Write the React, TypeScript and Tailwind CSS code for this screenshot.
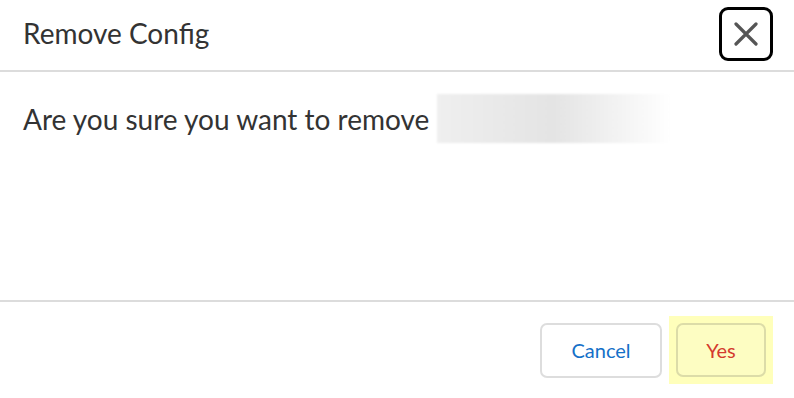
import { useState } from "react"

function CloseIcon() {
  return (
    <svg width="24" height="24" viewBox="0 0 24 24" fill="none" aria-hidden="true">
      <path d="M2 2L22 22M22 2L2 22" stroke="#555" strokeWidth="3.2" strokeLinecap="round" />
    </svg>
  )
}

export default function App() {
  const [open, setOpen] = useState(true)
  const configName = "config-name"

  if (!open) return null

  return (
    <div className="w-[794px] h-[398px] bg-white flex flex-col font-['Lato',sans-serif] text-[#333]">
      {/* Header */}
      <div className="h-[72px] flex items-center justify-between pl-[23px] pr-[21px] border-b-2 border-[#dcdcdc]">
        <h2 className="text-[28px] leading-none pb-[4px]">Remove Config</h2>
        <button
          onClick={() => setOpen(false)}
          aria-label="Close"
          className="w-[54px] h-[54px] mb-[3px] flex items-center justify-center border-[3px] border-black rounded-[9px] bg-white"
        >
          <CloseIcon />
        </button>
      </div>

      {/* Body */}
      <div className="flex-1 px-[23px] pt-[22px]">
        <p className="flex items-center text-[28px] leading-none">
          <span>Are you sure you want to remove</span>
          <span
            className="ml-[8px] inline-block w-[234px] h-[49px] bg-gradient-to-r from-[#efefef] via-[#e4e4e4] to-white text-transparent blur-[1px] select-none"
            aria-hidden="true"
          >
            {configName}
          </span>
        </p>
      </div>

      {/* Footer */}
      <div className="h-[98px] border-t-2 border-[#dcdcdc] flex items-center justify-end gap-[7px] pr-[21px]">
        <button className="w-[122px] h-[55px] rounded-[7px] border-2 border-[#dddddd] bg-white text-[20px] text-[#1470c8]">
          Cancel
        </button>
        <div className="p-[7px] bg-[#ffffbb]">
          <button className="block w-[90px] h-[54px] rounded-[7px] border-2 border-[#dcdca8] bg-[#fdfdc2] text-[20px] text-[#d43a2e]">
            Yes
          </button>
        </div>
      </div>
    </div>
  )
}
